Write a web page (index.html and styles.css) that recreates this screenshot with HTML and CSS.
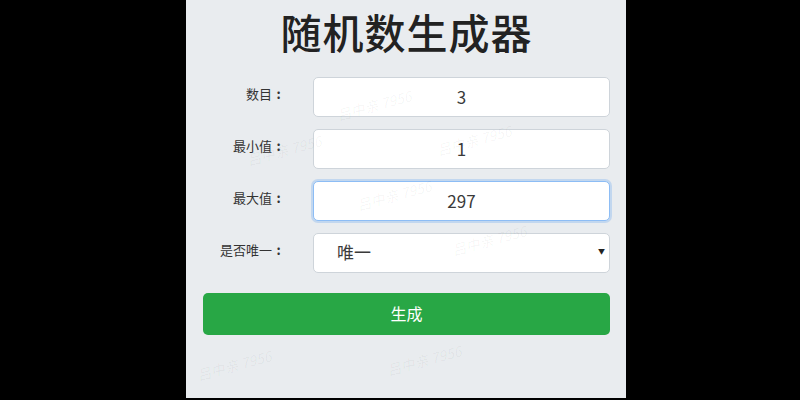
FILE: index.html
```html
<!DOCTYPE html>
<html lang="zh-CN">
<head>
<meta charset="utf-8">
<title>随机数生成器</title>
<link rel="stylesheet" href="styles.css">
</head>
<body>
<div class="panel">
  <h1 class="title">随机数生成器</h1>
  <form class="form">
    <label class="label" for="count">数目<span class="colon">:</span></label>
    <input class="field" id="count" type="text" value="3">
    <label class="label" for="min">最小值<span class="colon">:</span></label>
    <input class="field" id="min" type="text" value="1">
    <label class="label" for="max">最大值<span class="colon">:</span></label>
    <input class="field field-focus" id="max" type="text" value="297">
    <label class="label" for="uniq">是否唯一<span class="colon">:</span></label>
    <div class="select-wrap">
      <select class="select" id="uniq">
        <option>唯一</option>
        <option>不唯一</option>
      </select>
    </div>
    <button class="btn" type="button">生成</button>
  </form>
  <div class="wm wm1">吕中亲 7956</div>
  <div class="wm wm2">吕中亲 7956</div>
  <div class="wm wm3">吕中亲 7956</div>
  <div class="wm wm4">吕中亲 7956</div>
  <div class="wm wm5">吕中亲 7956</div>
  <div class="wm wm6">吕中亲 7956</div>
  <div class="wm wm7">吕中亲 7956</div>
</div>
</body>
</html>
```
FILE: styles.css
```css
html, body {
  margin: 0;
  padding: 0;
  background: #000;
  height: 400px;
  overflow: hidden;
}
body {
  font-family: "Noto Sans CJK SC", "Noto Sans", sans-serif;
}
.panel {
  position: relative;
  margin-left: 186px;
  width: 440px;
  height: 398px;
  background: #e9ecef;
  box-sizing: border-box;
  padding: 0 16px 0 17px;
  overflow: hidden;
}
.title {
  margin: 0;
  padding-top: 0;
  font-size: 41px;
  font-weight: 500;
  line-height: 62px;
  height: 58px;
  text-align: center;
  color: #222;
  letter-spacing: 1px;
}
.form {
  margin-top: 19px;
  display: grid;
  grid-template-columns: 110px 1fr;
  row-gap: 12px;
  align-items: start;
}
.label {
  font-size: 13px;
  line-height: 34px;
  color: #333;
  text-align: right;
  padding-right: 28px;
}
.colon {
  display: inline-block;
  width: 13px;
  text-align: center;
  font-weight: 700;
}
.field, .select {
  box-sizing: border-box;
  width: 100%;
  height: 40px;
  border: 1px solid #ced4da;
  border-radius: 5px;
  background: #fff;
  font-family: "Noto Sans CJK SC", "Noto Sans", sans-serif;
  font-size: 17px;
  color: #3a3a3a;
  text-align: center;
  outline: none;
  padding-bottom: 2px;
}
.field-focus {
  border-color: #8dbdf5;
  box-shadow: 0 0 0 2px rgba(80, 150, 240, 0.25);
}
.select-wrap {
  position: relative;
}
.select {
  appearance: none;
  -webkit-appearance: none;
  text-align: left;
  padding-left: 23px;
  padding-bottom: 3px;
}
.select-wrap::after {
  content: "▼";
  position: absolute;
  right: 5px;
  top: 13px;
  font-size: 7px;
  color: #222;
  pointer-events: none;
}
.btn {
  grid-column: 1 / 3;
  margin-top: 8px;
  height: 42px;
  border: none;
  border-radius: 5px;
  background: #28a745;
  color: #fff;
  font-family: "Noto Sans CJK SC", "Noto Sans", sans-serif;
  font-size: 16px;
  padding-bottom: 4px;
}
.wm {
  position: absolute;
  font-size: 14px;
  font-style: italic;
  color: rgba(0, 0, 0, 0.045);
  transform: rotate(-15deg);
  white-space: nowrap;
  pointer-events: none;
}
.wm1 { left: 150px; top: 95px; }
.wm2 { left: 250px; top: 130px; }
.wm3 { left: 60px; top: 140px; }
.wm4 { left: 170px; top: 185px; }
.wm5 { left: 265px; top: 230px; }
.wm6 { left: 200px; top: 350px; }
.wm7 { left: 10px; top: 355px; }
```
